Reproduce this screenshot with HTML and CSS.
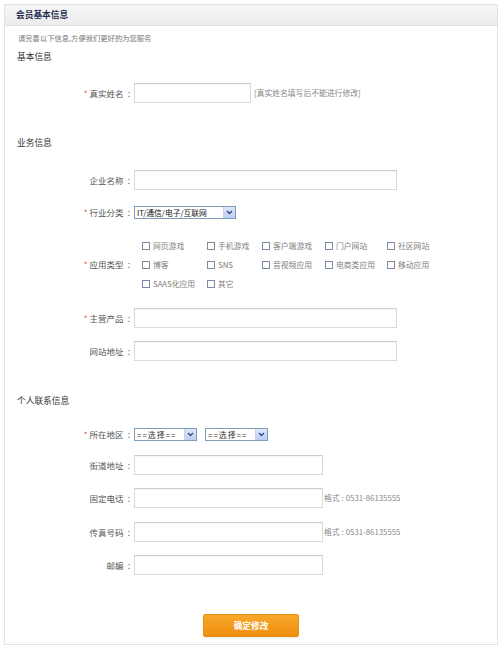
FILE: index.html
```html
<!DOCTYPE html>
<html lang="zh-CN">
<head>
<meta charset="utf-8">
<title>会员基本信息</title>
<link rel="stylesheet" href="styles.css">
</head>
<body>
<div class="panel">
  <div class="panel-head">会员基本信息</div>
  <div class="panel-body">
    <p class="intro">请完善以下信息,方便我们更好的为您服务</p>
    <h3 class="sec sec-basic">基本信息</h3>

    <div class="row row-name">
      <label class="lbl"><span class="req">*</span>真实姓名<span class="colon">:</span></label>
      <div class="inp inp-s"></div>
      <span class="hint hint-gap">[真实姓名填写后不能进行修改]</span>
    </div>

    <h3 class="sec sec-biz">业务信息</h3>

    <div class="row row-company">
      <label class="lbl">企业名称<span class="colon">:</span></label>
      <div class="inp inp-l"></div>
    </div>

    <div class="row row-sel row-industry">
      <label class="lbl"><span class="req">*</span>行业分类<span class="colon">:</span></label>
      <div class="sel sel-industry">
        <span class="sel-text">IT/通信/电子/互联网</span>
        <span class="sel-btn"><svg width="7" height="5" viewBox="0 0 7 5"><path d="M1 1 L3.5 3.5 L6 1" fill="none" stroke="#2d4a86" stroke-width="1.4"/></svg></span>
      </div>
    </div>

    <div class="row row-apps">
      <label class="lbl"><span class="req">*</span>应用类型<span class="colon">:</span></label>
      <div class="checks">
        <span class="ck"><i></i>网页游戏</span>
        <span class="ck"><i></i>手机游戏</span>
        <span class="ck"><i></i>客户端游戏</span>
        <span class="ck"><i></i>门户网站</span>
        <span class="ck"><i></i>社区网站</span>
        <span class="ck"><i></i>博客</span>
        <span class="ck"><i></i>SNS</span>
        <span class="ck"><i></i>音视频应用</span>
        <span class="ck"><i></i>电商类应用</span>
        <span class="ck"><i></i>移动应用</span>
        <span class="ck"><i></i>SAAS化应用</span>
        <span class="ck"><i></i>其它</span>
      </div>
    </div>

    <div class="row row-product">
      <label class="lbl"><span class="req">*</span>主营产品<span class="colon">:</span></label>
      <div class="inp inp-l"></div>
    </div>

    <div class="row row-site">
      <label class="lbl">网站地址<span class="colon">:</span></label>
      <div class="inp inp-l"></div>
    </div>

    <h3 class="sec sec-contact">个人联系信息</h3>

    <div class="row row-sel row-area">
      <label class="lbl"><span class="req">*</span>所在地区<span class="colon">:</span></label>
      <div class="sel sel-area">
        <span class="sel-text">==选择==</span>
        <span class="sel-btn"><svg width="7" height="5" viewBox="0 0 7 5"><path d="M1 1 L3.5 3.5 L6 1" fill="none" stroke="#2d4a86" stroke-width="1.4"/></svg></span>
      </div>
      <div class="sel sel-area sel-second">
        <span class="sel-text">==选择==</span>
        <span class="sel-btn"><svg width="7" height="5" viewBox="0 0 7 5"><path d="M1 1 L3.5 3.5 L6 1" fill="none" stroke="#2d4a86" stroke-width="1.4"/></svg></span>
      </div>
    </div>

    <div class="row row-street">
      <label class="lbl">街道地址<span class="colon">:</span></label>
      <div class="inp inp-m"></div>
    </div>

    <div class="row row-phone">
      <label class="lbl">固定电话<span class="colon">:</span></label>
      <div class="inp inp-m"></div>
      <span class="hint">格式<span class="hcolon">:</span>0531-86135555</span>
    </div>

    <div class="row row-fax">
      <label class="lbl">传真号码<span class="colon">:</span></label>
      <div class="inp inp-m"></div>
      <span class="hint">格式<span class="hcolon">:</span>0531-86135555</span>
    </div>

    <div class="row row-zip">
      <label class="lbl">邮编<span class="colon">:</span></label>
      <div class="inp inp-m"></div>
    </div>

    <div class="actions">
      <button class="btn" type="button">确定修改</button>
    </div>
  </div>
</div>
</body>
</html>
```

FILE: styles.css
```css
html, body {
  margin: 0;
  padding: 0;
  background: #ffffff;
}

body {
  font-family: "Noto Sans CJK SC", "Noto Sans", sans-serif;
  color: #555555;
}

.panel {
  margin: 4px 0 0 4px;
  width: 492px;
  height: 639px;
  border: 1px solid #e3e3e3;
  background: #ffffff;
  box-sizing: content-box;
}

.panel-head {
  height: 20px;
  line-height: 20px;
  padding-left: 11px;
  font-size: 8.7px;
  font-weight: bold;
  color: #1f2e52;
  background: linear-gradient(#f6f6f6, #ececec);
  border-bottom: 1px solid #e2e2e2;
}

.panel-body {
  padding: 0 12px 0 12px;
}

.intro {
  margin: 6px 0 0 1px;
  height: 12px;
  line-height: 12px;
  font-size: 7.3px;
  color: #777777;
}

.sec {
  margin: 0;
  height: 14px;
  line-height: 14px;
  font-size: 8.7px;
  font-weight: normal;
  color: #333333;
}

.sec-basic { margin-top: 6px; }
.sec-biz { margin-top: 33px; }
.sec-contact { margin-top: 33px; }

.row {
  display: flex;
  align-items: center;
  height: 20px;
}

.row-name { margin-top: 19px; }
.row-company { margin-top: 20px; }
.row-industry { margin-top: 16px; height: 13px; }
.row-apps { margin-top: 17px; height: 57px; }
.row-product { margin-top: 15px; }
.row-site { margin-top: 13px; }
.row-area { margin-top: 20px; height: 13px; }
.row-street { margin-top: 14px; }
.row-phone { margin-top: 13px; }
.row-fax { margin-top: 14px; }
.row-zip { margin-top: 13px; }

.lbl {
  flex: 0 0 117px;
  width: 117px;
  text-align: right;
  font-size: 8.5px;
  line-height: 12px;
  color: #555555;
  white-space: nowrap;
}

.colon {
  margin-left: 4px;
  margin-right: 4px;
}

.req {
  color: #e4462a;
  margin-right: 2px;
  font-size: 8px;
}

.inp {
  height: 18px;
  border: 1px solid #d9d9d9;
  border-top-color: #cdcdcd;
  background: #ffffff;
  box-shadow: inset 0 1px 1px rgba(0, 0, 0, 0.03);
}

.inp-s { width: 115px; }
.inp-m { width: 187px; }
.inp-l { width: 261px; }

.hint {
  margin-left: 1px;
  font-size: 7.8px;
  line-height: 12px;
  color: #888888;
  white-space: nowrap;
}

.hcolon {
  margin: 0 2px;
}

.hint-gap { margin-left: 3px; }

.sel {
  display: flex;
  align-items: center;
  height: 11px;
  border: 1px solid #7f9db9;
  background: #ffffff;
  box-sizing: content-box;
}

.sel-industry { width: 100px; }
.sel-area { width: 61px; }
.sel-second { margin-left: 8px; }

.sel-text {
  flex: 1 1 auto;
  padding-left: 2px;
  font-size: 7.8px;
  line-height: 11px;
  color: #111111;
  white-space: nowrap;
  overflow: hidden;
}

.sel-area .sel-text {
  letter-spacing: 1.1px;
  color: #333333;
}

.sel-btn {
  flex: 0 0 11px;
  width: 11px;
  height: 11px;
  display: flex;
  align-items: center;
  justify-content: center;
  background: linear-gradient(#dfe8fb, #bccdf1);
  border-left: 1px solid #c4d2ef;
}

.sel-btn svg {
  display: block;
}

.checks {
  display: grid;
  grid-template-columns: 65px 55px 63px 62px auto;
  grid-auto-rows: 19px;
  margin-left: 8px;
  align-self: stretch;
}

.ck {
  display: flex;
  align-items: center;
  font-size: 7.8px;
  color: #808080;
  white-space: nowrap;
}

.ck i {
  display: block;
  width: 6px;
  height: 6px;
  border: 1px solid #7b8ba3;
  background: #ffffff;
  margin-right: 3px;
}

.actions {
  display: flex;
  justify-content: center;
  margin-top: 39px;
}

.btn {
  width: 96px;
  height: 23px;
  padding: 0;
  border: 1px solid #ea8f12;
  border-radius: 2px;
  background: linear-gradient(#f7a82b, #ef8e0e);
  color: #ffffff;
  font-family: "Noto Sans CJK SC", "Noto Sans", sans-serif;
  font-size: 8.7px;
  font-weight: bold;
  box-shadow: 0 1px 1px rgba(0, 0, 0, 0.08);
}
```
